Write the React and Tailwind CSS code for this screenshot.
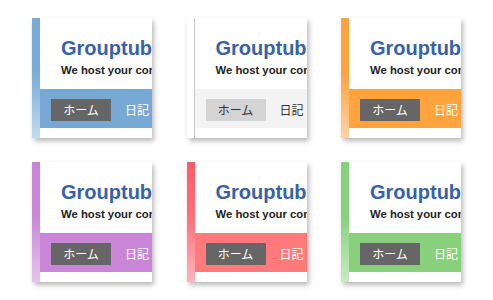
import React from "react";

const cards = [
  { bar: "bg-[linear-gradient(to_bottom,#7aabd6_0%,#7aabd6_45%,#c3dbf0_100%)]", band: "bg-[#78a9d5]", btn: "bg-[#666666] text-white", link: "text-white" },
  { bar: "bg-white border-r border-[#c8c8c8]", band: "bg-[#f3f3f3]", btn: "bg-[#d4d4d4] text-[#333333]", link: "text-[#333333]" },
  { bar: "bg-[linear-gradient(to_bottom,#ffa33e_0%,#ffa33e_45%,#ffd3a6_100%)]", band: "bg-[#ffa33e]", btn: "bg-[#666666] text-white", link: "text-white" },
  { bar: "bg-[linear-gradient(to_bottom,#c986d6_0%,#c986d6_45%,#e6c5ee_100%)]", band: "bg-[#c986d6]", btn: "bg-[#666666] text-white", link: "text-white" },
  { bar: "bg-[linear-gradient(to_bottom,#ff5a6a_0%,#ff6f7a_45%,#ffb5bc_100%)]", band: "bg-[#ff7b7b]", btn: "bg-[#666666] text-white", link: "text-white" },
  { bar: "bg-[linear-gradient(to_bottom,#88d07c_0%,#88d07c_45%,#c8ebc2_100%)]", band: "bg-[#88d07c]", btn: "bg-[#666666] text-white", link: "text-white" },
];

function Card({ c }) {
  return (
    <div className="flex h-[120px] w-[120px] bg-white shadow-[2px_3px_5px_rgba(0,0,0,0.28)]">
      <div className={`w-[8px] h-full shrink-0 ${c.bar}`} />
      <div className="w-[112px] overflow-hidden flex flex-col">
        <div className="pl-[21px] pt-[18px] h-[71px] whitespace-nowrap" style={{ fontFamily: '"Liberation Sans", Arial, sans-serif' }}>
          <div className="text-[20px] leading-[24px] font-bold text-[#3762a8]">Grouptube</div>
          <div className="mt-[4px] text-[11.3px] leading-[13px] font-bold text-[#222222]">We host your community</div>
        </div>
        <div className={`h-[39px] pt-[10px] pl-[11px] flex items-start whitespace-nowrap ${c.band}`} style={{ fontFamily: '"Noto Sans CJK JP", sans-serif' }}>
          <div className={`w-[60px] h-[22px] flex items-center justify-center text-[12px] leading-none ${c.btn}`}>ホーム</div>
          <div className={`ml-[14px] h-[22px] flex items-center text-[12px] leading-none ${c.link}`}>日記</div>
        </div>
      </div>
    </div>
  );
}

export default function App() {
  return (
    <div className="w-[493px] h-[300px] bg-white pl-[32px] pt-[18px]">
      <div className="grid grid-cols-[120px_120px_120px] gap-x-[34.5px] gap-y-[24px]">
        {cards.map((c, i) => (
          <Card key={i} c={c} />
        ))}
      </div>
    </div>
  );
}
